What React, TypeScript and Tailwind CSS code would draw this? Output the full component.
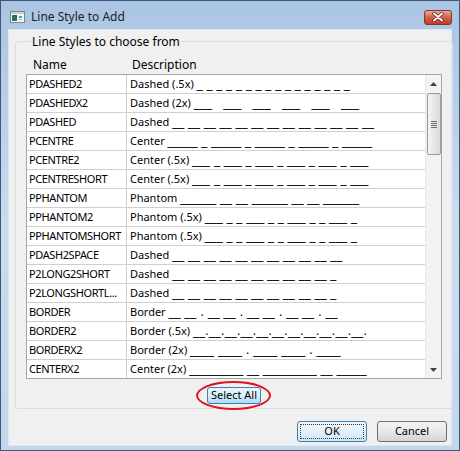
import React from "react";

// label is the plain text, pattern is the underscore drawing of the line type
const lineStyles = [
  { name: "PDASHED2", label: "Dashed (.5x)", pattern: "_ _ _ _ _ _ _ _ _ _ _ _ _ _ _ _" },
  { name: "PDASHEDX2", label: "Dashed (2x)", pattern: "___   ___   ___   ___   ___   ___" },
  { name: "PDASHED", label: "Dashed", pattern: "__ __ __ __ __ __ __ __ __ __ __ __ __" },
  { name: "PCENTRE", label: "Center", pattern: "_____ _ _____ _ _____ _ _____ _ _____" },
  { name: "PCENTRE2", label: "Center (.5x)", pattern: "___ _ ___ _ ___ _ ___ _ ___ _ ___" },
  { name: "PCENTRESHORT", label: "Center (.5x)", pattern: "___ _ ___ _ ___ _ ___ _ ___ _ ___" },
  { name: "PPHANTOM", label: "Phantom", pattern: "______ __ __ ______ __ __ ______" },
  { name: "PPHANTOM2", label: "Phantom (.5x)", pattern: "___ _ _ ___ _ _ ___ _ _ ___ _" },
  { name: "PPHANTOMSHORT", label: "Phantom (.5x)", pattern: "___ _ _ ___ _ _ ___ _ _ ___ _" },
  { name: "PDASH2SPACE", label: "Dashed", pattern: "__ __ __ __ __ __ __ __ __ __ __" },
  { name: "P2LONG2SHORT", label: "Dashed", pattern: "__ __ __ __ __ __ __ __ __ __ _" },
  { name: "P2LONGSHORTL...", label: "Dashed", pattern: "__ __ __ __ __ __ __ __ __ __ _" },
  { name: "BORDER", label: "Border", pattern: "__ __ . __ __ . __ __ . __ __ . __" },
  { name: "BORDER2", label: "Border (.5x)", pattern: "__.__.__.__.__.__.__.__.__.__.__." },
  { name: "BORDERX2", label: "Border (2x)", pattern: "____ ____ . ____ ____ . ____" },
  { name: "CENTERX2", label: "Center (2x)", pattern: "_________ __ _________ __ _____" },
];

const WindowIcon = () => (
  <svg width="15" height="12" viewBox="0 0 15 12">
    <rect x="0.5" y="0.5" width="14" height="11" fill="#f4f6f8" stroke="#7a8590" />
    <rect x="1" y="1" width="13" height="2" fill="#c7ced6" />
    <rect x="2" y="4" width="5" height="6" fill="#2f6f62" />
    <rect x="9" y="5" width="3" height="2" fill="#3aa0c8" />
    <rect x="9" y="8" width="3" height="1" fill="#8fc27a" />
  </svg>
);

const CloseIcon = () => (
  <svg width="12" height="10" viewBox="0 0 12 10">
    <path d="M2 1.5 L10 8.5 M10 1.5 L2 8.5" stroke="#5a1a12" strokeWidth="3.4" strokeLinecap="round" />
    <path d="M2 1.5 L10 8.5 M10 1.5 L2 8.5" stroke="#ffffff" strokeWidth="2" strokeLinecap="round" />
  </svg>
);

const ScrollBar = () => (
  <div className="flex w-[16px] flex-col bg-[#f3f3f3] border-l border-[#e8e8e8]">
    <div className="flex h-[17px] items-center justify-center">
      <svg width="7" height="4" viewBox="0 0 7 4">
        <path d="M0 4 L3.5 0 L7 4 Z" fill="#404040" />
      </svg>
    </div>
    <div className="mx-auto mt-[1px] flex h-[62px] w-[14px] flex-col items-center justify-center gap-[1px] rounded-[2px] border border-[#9a9a9a] bg-linear-to-r from-[#f5f5f5] to-[#d9d9d9]">
      <div className="h-px w-[6px] bg-[#6d6d6d]" />
      <div className="h-px w-[6px] bg-[#6d6d6d]" />
      <div className="h-px w-[6px] bg-[#6d6d6d]" />
      <div className="h-px w-[6px] bg-[#6d6d6d]" />
    </div>
    <div className="flex-1" />
    <div className="flex h-[17px] items-center justify-center">
      <svg width="7" height="4" viewBox="0 0 7 4">
        <path d="M0 0 L7 0 L3.5 4 Z" fill="#404040" />
      </svg>
    </div>
  </div>
);

export default function App() {
  return (
    <div className="flex h-[451px] w-[460px] flex-col overflow-hidden border border-[#3e5878] bg-linear-to-b from-[#aac5e3] via-[#c9dbef] to-[#c3d7ed] font-['Noto_Sans',sans-serif] text-black">
      {/* title bar */}
      <div className="flex h-[28px] shrink-0 items-center pl-[9px] pr-[7px] pt-[4px]">
        <WindowIcon />
        <span className="ml-[6px] text-[12px] leading-none text-[#1e1e1e]">Line Style to Add</span>
        <div className="ml-auto flex h-[15px] w-[28px] items-center justify-center rounded-[3px] border border-[#7b3a30] bg-linear-to-b from-[#e9a899] via-[#d2604b] to-[#c43c26]">
          <CloseIcon />
        </div>
      </div>

      {/* client area */}
      <div className="mx-[7px] mb-[4px] flex flex-1 flex-col border border-[#dce6f0] bg-[#f0f0f0]">
        <fieldset className="ml-[6px] mt-[4px] w-[434px] rounded-[3px] border border-[#d5dfe5] px-[10px] pb-[4px]">
          <legend className="ml-[5px] px-[1px] text-[12px] leading-[15px]">Line Styles to choose from</legend>

          <div className="mt-[6px] flex h-[19px] items-center text-[12px]">
            <span className="ml-[7px] w-[99px]">Name</span>
            <span>Description</span>
          </div>

          <div className="flex w-[416px] border border-[#a6a6a6] text-[11px]">
            <div className="flex-1 bg-white">
              {lineStyles.map((item, i) => (
                <div
                  key={item.name}
                  className={
                    i < lineStyles.length - 1
                      ? "flex h-[19px] items-center border-b border-[#cfcfcf]"
                      : "flex h-[18px] items-center"
                  }
                >
                  <div className="flex h-full w-[100px] items-center border-r border-[#cfcfcf] pl-[2px] tracking-[-0.4px]">
                    {item.name}
                  </div>
                  <div className="flex items-baseline whitespace-pre pl-[3px]">
                    <span>{item.label} </span>
                    <span className="font-['DejaVu_Sans',sans-serif] text-[12px] leading-none">{item.pattern}</span>
                  </div>
                </div>
              ))}
            </div>
            <ScrollBar />
          </div>

          <div className="mt-[8px] flex justify-center">
            <div className="relative">
              <div className="flex h-[17px] w-[54px] items-center justify-center rounded-[3px] border border-[#3c7fb1] bg-linear-to-b from-[#eaf6fd] via-[#d9f0fc] to-[#a9dbf6] text-[11px]">
                Select All
              </div>
              <div className="absolute -bottom-[6px] -left-[11px] -right-[10px] -top-[6px] rounded-[50%] border-[2.5px] border-[#e0141c]" />
            </div>
          </div>
        </fieldset>

        <div className="mr-[4px] mt-[12px] flex justify-end gap-[10px] text-[11px]">
          <div className="flex h-[21px] w-[70px] items-center justify-center rounded-[3px] border border-[#3c7fb1] bg-linear-to-b from-[#f2f8fc] via-[#e3f1fa] to-[#cde6f5] p-[2px]">
            <div className="flex h-full w-full items-center justify-center border border-dotted border-[#3a3a3a]">OK</div>
          </div>
          <div className="flex h-[21px] w-[70px] items-center justify-center rounded-[3px] border border-[#707070] bg-linear-to-b from-[#f3f3f3] via-[#e8e8e8] to-[#d4d4d4]">
            Cancel
          </div>
        </div>
      </div>
    </div>
  );
}
